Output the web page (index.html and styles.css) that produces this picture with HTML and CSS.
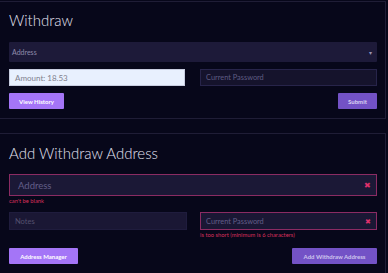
FILE: index.html
```
<!DOCTYPE html>
<html>
<head>
<meta charset="utf-8">
<link rel="stylesheet" href="styles.css">
</head>
<body>
<section class="panel panel-top">
  <h2 class="title">Withdraw</h2>
  <div class="select">
    <span>Address</span>
    <span class="caret">&#9662;</span>
  </div>
  <div class="row">
    <div class="field field-light">Amount: 18.53</div>
    <div class="field field-dark">Current Password</div>
  </div>
  <div class="actions">
    <button class="btn btn-bright">View History</button>
    <button class="btn btn-muted">Submit</button>
  </div>
</section>
<section class="panel panel-bottom">
  <h2 class="title title2">Add Withdraw Address</h2>
  <div class="field field-big field-error">
    <span>Address</span>
    <span class="x">&#10006;</span>
  </div>
  <div class="err err1">can't be blank</div>
  <div class="row row2">
    <div class="col">
      <div class="field field-notes">Notes</div>
    </div>
    <div class="col">
      <div class="field field-notes field-error">
        <span>Current Password</span>
        <span class="x x-small">&#10006;</span>
      </div>
      <div class="err">is too short (minimum is 6 characters)</div>
    </div>
  </div>
  <div class="actions actions2">
    <button class="btn btn-bright">Address Manager</button>
    <button class="btn btn-muted btn-wide">Add Withdraw Address</button>
  </div>
</section>
</body>
</html>
```
FILE: styles.css
```
* { box-sizing: border-box; }
html, body { margin: 0; padding: 0; }
body {
  background: #07071a;
  font-family: Lato, "Noto Sans", sans-serif;
  width: 388px;
  height: 273px;
  overflow: hidden;
  padding-top: 1px;
}
.panel {
  width: 386px;
  border: 1px solid #1f1d36;
  border-left: none;
  padding: 0 8px 0 9px;
  background: #07071a;
}
.panel-top { height: 118px; }
.panel-bottom { margin-top: 14px; height: 140px; border-bottom: none; }
.title {
  margin: 0;
  font-weight: 300;
  font-size: 15px;
  line-height: 18px;
  color: #e4e2f2;
  padding-top: 9px;
}
.title2 { padding-top: 10px; }
.select {
  margin-top: 13px;
  height: 20px;
  background: #1d1a39;
  border-radius: 1px;
  display: flex;
  align-items: center;
  justify-content: space-between;
  padding: 0 5px 0 3px;
  font-size: 7px;
  color: #8f8bab;
}
.caret { font-size: 6px; color: #9995b5; }
.row {
  display: flex;
  justify-content: space-between;
  margin-top: 7px;
}
.field {
  height: 17px;
  display: flex;
  align-items: center;
  justify-content: space-between;
  font-size: 7.4px;
  padding: 0 5px;
}
.field-light {
  width: 176px;
  background: #e8f0fe;
  color: #80808c;
  border: 1px solid #c8cde0;
  font-size: 8px;
}
.field-dark {
  width: 177px;
  background: #15132c;
  border: 1px solid #27244a;
  color: #5f5b82;
}
.actions {
  display: flex;
  justify-content: space-between;
  margin-top: 7px;
}
.btn {
  border: none;
  height: 16px;
  padding: 0;
  font-family: Lato, "Noto Sans", sans-serif;
  font-weight: 700;
  font-size: 6px;
  color: #fff;
  border-radius: 1px;
}
.btn-bright { background: #a475f7; width: 55px; }
.btn-muted { background: #7352c6; color: #d9d0f2; width: 39px; }
.field-big {
  margin-top: 12px;
  height: 22px;
  width: 368px;
  font-size: 9.5px;
  padding: 0 5px 0 8px;
  background: #1b1836;
  color: #625e88;
}
.field-error { border: 1px solid #8b2b63; }
.x { color: #e0306c; font-size: 8px; }
.x-small { font-size: 7px; }
.err {
  font-size: 5.8px;
  color: #d9305c;
  line-height: 8px;
  margin-top: 1px;
}
.err1 { margin-top: 1px; }
.row2 { margin-top: 7px; align-items: flex-start; }
.col { width: 177px; }
.col:first-child { width: 178px; }
.field-notes {
  height: 18px;
  background: #1a1734;
  color: #55516f;
  font-size: 7.5px;
}
.col:first-child .field-notes { border: 1px solid #1f1c3d; }
.field-notes.field-error { color: #625e88; font-size: 7.4px; }
.actions2 { margin-top: 9px; }
.actions2 .btn-bright { width: 69px; }
.btn-wide { width: 85px; color: #cfc6ee; }
```
